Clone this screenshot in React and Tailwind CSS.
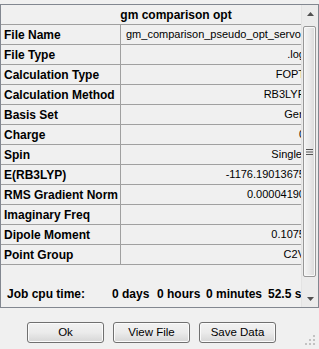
import React from "react";

const rows = [
  ["File Name", "gm_comparison_pseudo_opt_servout.log", "left"],
  ["File Type", ".log"],
  ["Calculation Type", "FOPT"],
  ["Calculation Method", "RB3LYP"],
  ["Basis Set", "Gen"],
  ["Charge", "0"],
  ["Spin", "Singlet"],
  ["E(RB3LYP)", "-1176.19013675"],
  ["RMS Gradient Norm", "0.00004190"],
  ["Imaginary Freq", ""],
  ["Dipole Moment", "0.1075"],
  ["Point Group", "C2V"],
];

function Btn({ children }) {
  return (
    <div className="w-[77px] h-[21px] rounded-[3px] border border-[#707070] bg-gradient-to-b from-[#f2f2f2] via-[#ebebeb] to-[#d6d6d6] shadow-[inset_0_0_0_1px_#fbfbfb] flex items-center justify-center text-[11.5px] text-black">
      {children}
    </div>
  );
}

export default function App() {
  return (
    <div className="w-[319px] h-[349px] bg-[#f0f0f0] relative overflow-hidden font-['Arial','Liberation_Sans',sans-serif] text-black">
      <div className="h-[4px]" />
      <div className="h-[304px] border border-[#828790] flex">
        <div className="w-[300px] overflow-hidden flex flex-col">
          <div className="w-[350px] h-[20px] shrink-0 border-b border-[#a0a0a0] flex items-center justify-center font-bold text-[12px]">
            gm comparison opt
          </div>
          {rows.map(([k, v, align]) => (
            <div key={k} className="w-[308px] h-[20px] shrink-0 border-b border-[#a0a0a0] flex">
              <div className="w-[120px] shrink-0 border-r border-[#a0a0a0] pl-[3px] flex items-center font-bold text-[12px] whitespace-nowrap">
                {k}
              </div>
              {align === "left" ? (
                <div className="w-[186px] shrink-0 pl-[5px] flex items-center text-[11px] whitespace-nowrap overflow-hidden">
                  {v}
                </div>
              ) : (
                <div className="w-[185px] shrink-0 pr-[1px] flex items-center justify-end text-[11px] whitespace-nowrap overflow-hidden">
                  {v}
                </div>
              )}
            </div>
          ))}
          <div className="mt-[19px] h-[20px] flex items-center font-bold text-[12px] whitespace-nowrap">
            <span className="w-[111px] shrink-0 pl-[6px]">Job cpu time:</span>
            <span className="w-[45px] shrink-0">0 days</span>
            <span className="w-[49px] shrink-0">0 hours</span>
            <span className="w-[62px] shrink-0">0 minutes</span>
            <span className="shrink-0">52.5 seconds</span>
          </div>
        </div>
        <div className="w-[17px] shrink-0 bg-[#ebebeb] flex flex-col border-l border-[#e3e3e3]">
          <div className="h-[17px] flex items-center justify-center">
            <svg width="7" height="4" viewBox="0 0 7 4">
              <path d="M3.5 0 L7 4 L0 4 Z" fill="#505050" />
            </svg>
          </div>
          <div className="mt-[4px] h-[251px] ml-[1px] w-[13px] rounded-[2px] border border-[#979797] bg-gradient-to-r from-[#f4f4f4] via-[#e9e9e9] to-[#d9d9d9] shadow-[inset_0_0_0_1px_#f8f8f8] flex items-center justify-center">
            <svg width="7" height="6" viewBox="0 0 7 6">
              <rect x="0" y="0" width="7" height="1" fill="#555" />
              <rect x="0" y="2.5" width="7" height="1" fill="#555" />
              <rect x="0" y="5" width="7" height="1" fill="#555" />
            </svg>
          </div>
          <div className="flex-1" />
          <div className="h-[17px] flex items-center justify-center">
            <svg width="7" height="4" viewBox="0 0 7 4">
              <path d="M0 0 L7 0 L3.5 4 Z" fill="#505050" />
            </svg>
          </div>
        </div>
      </div>
      <div className="mt-[14px] flex gap-[9px] pl-[27px]">
        <Btn>Ok</Btn>
        <Btn>View File</Btn>
        <Btn>Save Data</Btn>
      </div>
      <svg className="absolute right-[3px] bottom-[3px]" width="11" height="11" viewBox="0 0 11 11">
        <rect x="8" y="0" width="2" height="2" fill="#c2c2c2" />
        <rect x="4" y="4" width="2" height="2" fill="#c2c2c2" />
        <rect x="8" y="4" width="2" height="2" fill="#c2c2c2" />
        <rect x="0" y="8" width="2" height="2" fill="#c2c2c2" />
        <rect x="4" y="8" width="2" height="2" fill="#c2c2c2" />
        <rect x="8" y="8" width="2" height="2" fill="#c2c2c2" />
      </svg>
    </div>
  );
}
